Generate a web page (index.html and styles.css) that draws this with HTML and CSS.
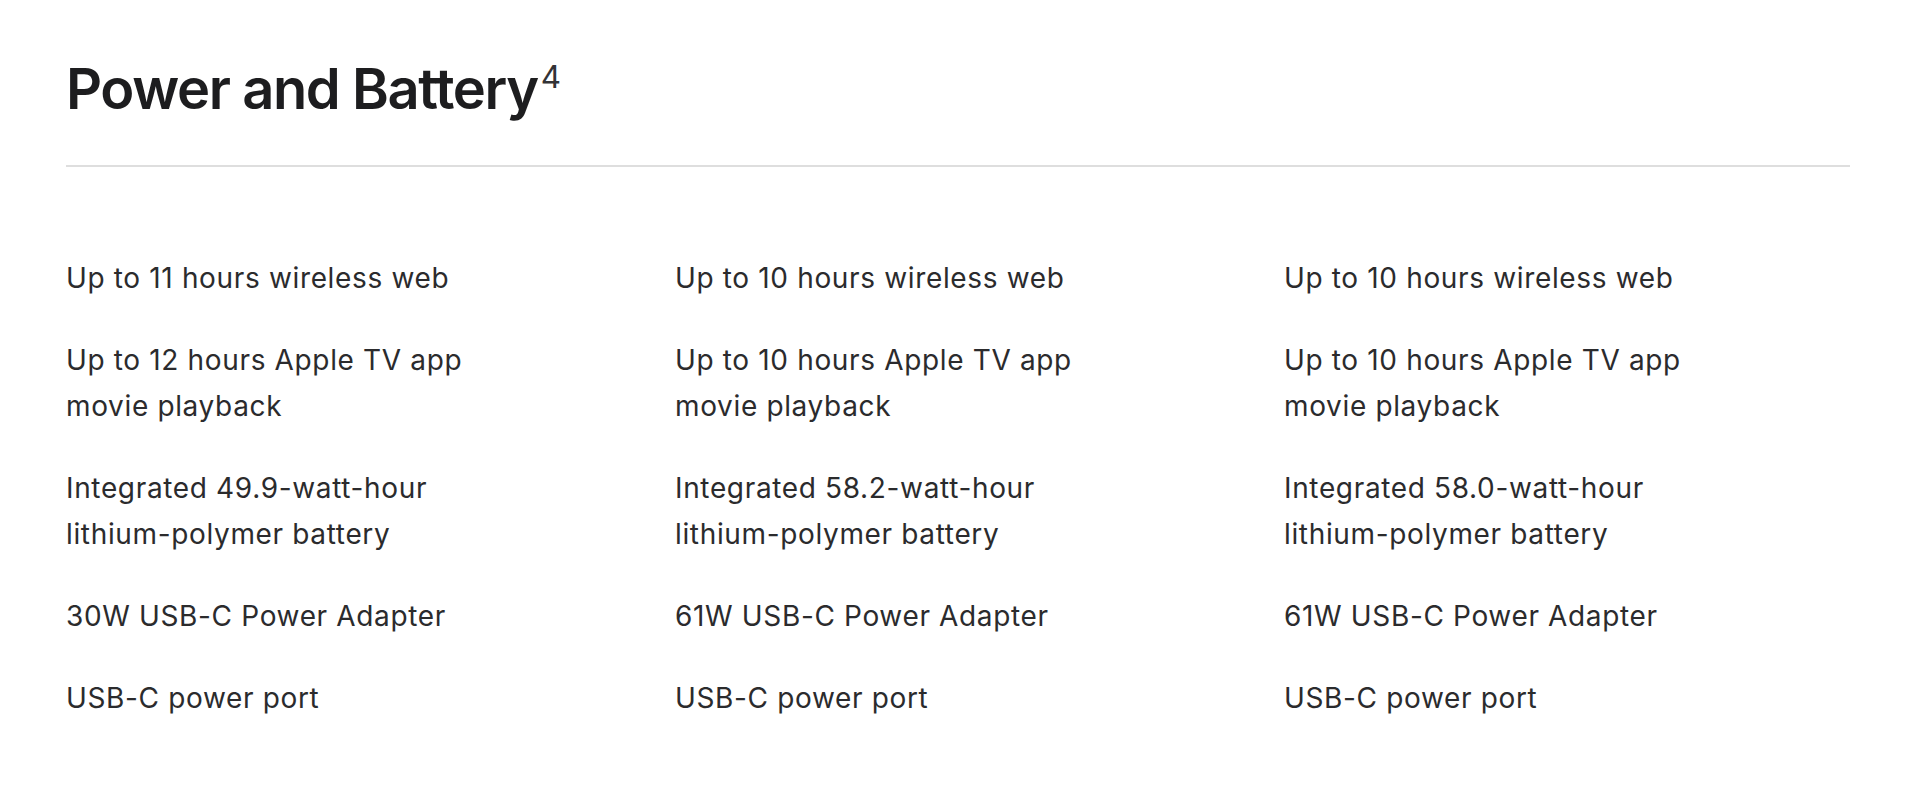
FILE: index.html
```html
<!DOCTYPE html>
<html lang="en">
<head>
<meta charset="utf-8">
<title>Power and Battery</title>
<link rel="stylesheet" href="styles.css">
</head>
<body>
<section class="specs">
  <h2 class="specs-title">Power and Battery<sup class="footnote">4</sup></h2>
  <hr class="divider">
  <div class="grid">
    <ul class="col">
      <li>Up to 11 hours wireless web</li>
      <li>Up to 12 hours Apple TV app movie playback</li>
      <li>Integrated 49.9-watt-hour lithium-polymer battery</li>
      <li>30W USB-C Power Adapter</li>
      <li>USB-C power port</li>
    </ul>
    <ul class="col">
      <li>Up to 10 hours wireless web</li>
      <li>Up to 10 hours Apple TV app movie playback</li>
      <li>Integrated 58.2-watt-hour lithium-polymer battery</li>
      <li>61W USB-C Power Adapter</li>
      <li>USB-C power port</li>
    </ul>
    <ul class="col">
      <li>Up to 10 hours wireless web</li>
      <li>Up to 10 hours Apple TV app movie playback</li>
      <li>Integrated 58.0-watt-hour lithium-polymer battery</li>
      <li>61W USB-C Power Adapter</li>
      <li>USB-C power port</li>
    </ul>
  </div>
</section>
</body>
</html>
```

FILE: styles.css
```css
html, body {
  margin: 0;
  padding: 0;
  background: #ffffff;
}

body {
  font-family: Inter, "Noto Sans", "Liberation Sans", sans-serif;
  color: #1d1d1f;
}

.specs {
  padding: 61px 70px 0 66px;
}

.specs-title {
  margin: 0;
  font-size: 56px;
  line-height: 56px;
  font-weight: 600;
  letter-spacing: -0.025em;
  color: #1d1d1f;
}

.footnote {
  font-size: 0.56em;
  font-weight: 400;
  vertical-align: top;
  line-height: 1;
  position: relative;
  top: 1px;
  margin-left: 3px;
  letter-spacing: 0;
  color: #333336;
}

.divider {
  margin: 48px 0 0 0;
  border: 0;
  height: 2px;
  background: #dedede;
}

.grid {
  display: grid;
  grid-template-columns: repeat(3, 564px);
  column-gap: 45px;
  padding-top: 88px;
}

.col {
  list-style: none;
  margin: 0;
  padding: 0;
  display: flex;
  flex-direction: column;
  gap: 36px;
}

.col li {
  max-width: 450px;
  font-size: 28px;
  line-height: 46px;
  letter-spacing: 0.65px;
  color: #2b2b2d;
}
```
